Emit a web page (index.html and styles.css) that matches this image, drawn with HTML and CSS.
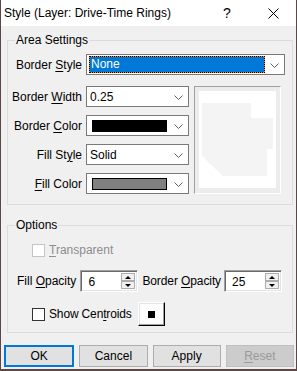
FILE: index.html
```html
<!DOCTYPE html>
<html lang="en">

<head>
    <meta charset="UTF-8">
    <title>Style (Layer: Drive-Time Rings)</title>
    <link rel="stylesheet" href="styles.css">
</head>

<body>
    <div class="window">
        <div class="titlebar">
            <span class="title">Style (Layer: Drive-Time Rings)</span>
            <span class="help">?</span>
            <span class="close">
                <svg width="11" height="11" viewBox="0 0 11 11">
                    <path d="M0.5 0.5 L10.5 10.5 M10.5 0.5 L0.5 10.5" stroke="#000" stroke-width="1" fill="none" />
                </svg>
            </span>
        </div>

        <fieldset class="group area">
            <legend>Area Settings</legend>
            <div class="row">
                <label class="lbl">Border <u>S</u>tyle</label>
                <div class="combo wide">
                    <span class="focus">None</span>
                    <svg class="arrow" width="9" height="5" viewBox="0 0 9 5"><path d="M0.5 0.5 L4.5 4.5 L8.5 0.5" stroke="#606060" fill="none" /></svg>
                </div>
            </div>
            <div class="split">
                <div class="fields">
                    <div class="row">
                        <label class="lbl">Border <u>W</u>idth</label>
                        <div class="combo">
                            <span class="val">0.25</span>
                            <svg class="arrow" width="9" height="5" viewBox="0 0 9 5"><path d="M0.5 0.5 L4.5 4.5 L8.5 0.5" stroke="#606060" fill="none" /></svg>
                        </div>
                    </div>
                    <div class="row">
                        <label class="lbl">Border <u>C</u>olor</label>
                        <div class="combo">
                            <span class="swatch black"></span>
                            <svg class="arrow" width="9" height="5" viewBox="0 0 9 5"><path d="M0.5 0.5 L4.5 4.5 L8.5 0.5" stroke="#606060" fill="none" /></svg>
                        </div>
                    </div>
                    <div class="row">
                        <label class="lbl">Fill St<u>y</u>le</label>
                        <div class="combo">
                            <span class="val">Solid</span>
                            <svg class="arrow" width="9" height="5" viewBox="0 0 9 5"><path d="M0.5 0.5 L4.5 4.5 L8.5 0.5" stroke="#606060" fill="none" /></svg>
                        </div>
                    </div>
                    <div class="row">
                        <label class="lbl"><u>F</u>ill Color</label>
                        <div class="combo">
                            <span class="swatch gray"></span>
                            <svg class="arrow" width="9" height="5" viewBox="0 0 9 5"><path d="M0.5 0.5 L4.5 4.5 L8.5 0.5" stroke="#606060" fill="none" /></svg>
                        </div>
                    </div>
                </div>
                <div class="preview">
                    <div class="canvas">
                        <svg width="77" height="97" viewBox="0 0 77 97">
                            <polygon points="3,12 52,12 52,27 74,27 74,58 68,58 68,85 24,85 3,65" fill="#f4f4f4" />
                        </svg>
                    </div>
                </div>
            </div>
        </fieldset>

        <fieldset class="group options">
            <legend>Options</legend>
            <div class="check-row disabled">
                <span class="box"></span>
                <span><u>T</u>ransparent</span>
            </div>
            <div class="spin-row">
                <label class="first">Fill <u>O</u>pacity</label>
                <div class="spin">
                    <span class="val">6</span>
                    <div class="spin-btns">
                        <span class="up"></span>
                        <span class="down"></span>
                    </div>
                </div>
                <label class="second">Border <u>O</u>pacity</label>
                <div class="spin">
                    <span class="val">25</span>
                    <div class="spin-btns">
                        <span class="up"></span>
                        <span class="down"></span>
                    </div>
                </div>
            </div>
            <div class="check-row centroids">
                <span class="box"></span>
                <span>Show Cen<u>t</u>roids</span>
                <button class="marker"><span class="dot"></span></button>
            </div>
        </fieldset>

        <div class="buttons">
            <button class="btn default">OK</button>
            <button class="btn">Cancel</button>
            <button class="btn">Apply</button>
            <button class="btn off"><u>R</u>eset</button>
        </div>
    </div>
</body>

</html>
```

FILE: styles.css
```css
* {
    margin: 0;
    padding: 0;
    box-sizing: border-box;
}

body {
    background: #5b4747;
    font-family: "Liberation Sans", Arial, sans-serif;
    font-size: 12px;
    color: #000;
}

u {
    text-decoration: underline;
    text-underline-offset: 2px;
}

.window {
    width: 295px;
    height: 369px;
    margin-left: 1px;
    background: #f0f0f0;
    overflow: hidden;
}

.titlebar {
    height: 26px;
    background: #fff;
    display: flex;
    align-items: center;
}

.title {
    flex: 1;
    padding-left: 3px;
}

.help {
    width: 46px;
    text-align: center;
    font-size: 14px;
}

.close {
    width: 46px;
    display: flex;
    justify-content: center;
    padding-top: 1px;
}

.group {
    border: 1px solid #dcdcdc;
    margin: 7px 3px 0 6px;
    padding: 7px 0 10px 0;
}

.group legend {
    margin-left: 7px;
    padding: 0 1px;
    line-height: 14px;
}

.row {
    display: flex;
    align-items: center;
    height: 21px;
}

.lbl {
    width: 78px;
    padding-right: 4px;
    text-align: right;
}

.combo {
    width: 103px;
    height: 21px;
    border: 1px solid #7a7a7a;
    background: #fff;
    display: flex;
    align-items: center;
    position: relative;
}

.combo.wide {
    width: 199px;
}

.combo .arrow {
    position: absolute;
    right: 5px;
    top: 8px;
}

.combo .val {
    padding-left: 3px;
}

.focus {
    margin-left: 2px;
    width: 176px;
    height: 17px;
    line-height: 15px;
    padding-left: 1px;
    color: #fff;
    border: 1px dotted #000;
    background: linear-gradient(#0078d7, #0078d7) padding-box, linear-gradient(#f08a24, #f08a24) border-box;
}

.swatch {
    margin-left: 5px;
    width: 75px;
    height: 12px;
    border: 1px solid #000;
}

.swatch.black {
    background: #000;
}

.swatch.gray {
    background: #808080;
}

.split {
    display: flex;
    margin-top: 11px;
}

.fields {
    display: flex;
    flex-direction: column;
    gap: 8px;
}

.preview {
    margin-left: 5px;
    width: 87px;
    height: 108px;
    border: 1px solid;
    border-color: #a0a0a0 #fff #fff #a0a0a0;
    background: #ececec;
    padding: 4px;
}

.canvas {
    background: #fff;
    width: 77px;
    height: 97px;
}

.canvas svg {
    display: block;
}

.group.options {
    margin-top: 13px;
    padding: 10px 0 6px 0;
}

.check-row {
    display: flex;
    align-items: center;
    height: 16px;
    padding-left: 24px;
    gap: 4px;
}

.box {
    width: 13px;
    height: 13px;
    border: 1px solid #333;
    background: #fff;
}

.disabled {
    color: #8d8d8d;
}

.disabled .box {
    border-color: #c4c4c4;
}

.spin-row {
    display: flex;
    align-items: center;
    height: 22px;
    margin-top: 12px;
    padding-left: 9px;
}

.spin-row .first {
    margin-right: 4px;
}

.spin-row .second {
    margin-left: 4px;
    margin-right: 3px;
    letter-spacing: -0.1px;
}

.spin {
    width: 58px;
    height: 22px;
    border: 1px solid;
    border-color: #a0a0a0 #fff #fff #a0a0a0;
    box-shadow: inset 1px 1px 0 #696969, inset -1px -1px 0 #e3e3e3;
    background: #fff;
    display: flex;
    padding: 2px 2px 2px 2px;
}

.spin .val {
    flex: 1;
    padding-left: 5px;
    line-height: 18px;
}

.spin-btns {
    width: 14px;
    display: flex;
    flex-direction: column;
}

.spin-btns span {
    flex: 1;
    border: 1px solid #adadad;
    background: #f0f0f0;
    display: flex;
    align-items: center;
    justify-content: center;
}

.spin-btns .up::after {
    content: "";
    border-left: 3px solid transparent;
    border-right: 3px solid transparent;
    border-bottom: 3px solid #000;
}

.spin-btns .down::after {
    content: "";
    border-left: 3px solid transparent;
    border-right: 3px solid transparent;
    border-top: 3px solid #000;
}

.centroids {
    height: 24px;
    margin-top: 10px;
}

.centroids span:nth-child(2) {
    letter-spacing: -0.15px;
}

.marker {
    margin-left: 2px;
    width: 27px;
    height: 24px;
    border: 1px solid;
    border-color: #fff #000 #000 #fff;
    box-shadow: inset -1px -1px 0 #a0a0a0, inset 1px 1px 0 #e3e3e3;
    background: #fdfdfd;
    display: flex;
    align-items: center;
    justify-content: center;
}

.dot {
    width: 7px;
    height: 7px;
    background: #000;
}

.buttons {
    display: flex;
    gap: 5px;
    margin-top: 12px;
    padding: 0 2px 0 3px;
}

.btn {
    flex: 1;
    height: 22px;
    border: 1px solid #adadad;
    background: #e1e1e1;
    font-family: "Liberation Sans", Arial, sans-serif;
    font-size: 12px;
    color: #000;
}

.btn.default {
    border: 2px solid #0078d7;
}

.btn.off {
    background: #cccccc;
    border-color: #bfbfbf;
    color: #9a9a9a;
}
```
